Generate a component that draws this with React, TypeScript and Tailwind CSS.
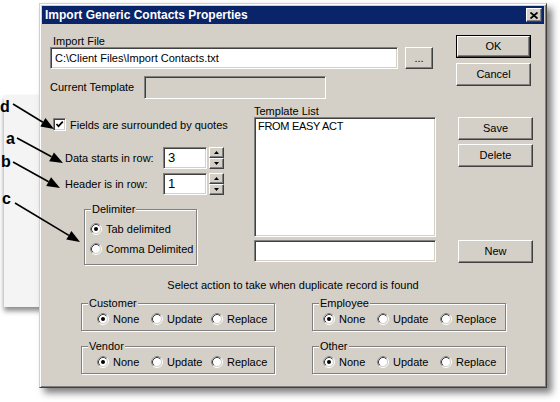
import type { ReactNode } from "react";

const raised =
  "bg-[#d4d0c8] border border-t-white border-l-white border-r-[#404040] border-b-[#404040] shadow-[inset_-1px_-1px_0_#808080]";
const sunken =
  "border border-t-[#808080] border-l-[#808080] border-r-white border-b-white shadow-[inset_1px_1px_0_#404040,inset_-1px_-1px_0_#d4d0c8]";

function Button({ label, className = "", isDefault = false }: { label: string; className?: string; isDefault?: boolean }) {
  if (isDefault)
    return (
      <div className={`border border-black ${className}`}>
        <div className={`${raised} h-full flex items-center justify-center`}>{label}</div>
      </div>
    );
  return <div className={`${raised} flex items-center justify-center ${className}`}>{label}</div>;
}

function Radio({ checked = false }: { checked?: boolean }) {
  return (
    <svg width="12" height="12" viewBox="0 0 12 12" className="shrink-0">
      <circle cx="6" cy="6" r="5.5" fill="none" stroke="#fff" />
      <path d="M2.11 9.89 A5.5 5.5 0 0 1 9.89 2.11" fill="none" stroke="#808080" />
      <circle cx="6" cy="6" r="4.5" fill="#fff" stroke="#d4d0c8" />
      <path d="M2.82 9.18 A4.5 4.5 0 0 1 9.18 2.82" fill="none" stroke="#404040" />
      {checked && <circle cx="6" cy="6" r="2" fill="#000" />}
    </svg>
  );
}

function RadioItem({ label, checked = false, className = "" }: { label: string; checked?: boolean; className?: string }) {
  return (
    <div className={`flex items-center gap-[4px] whitespace-nowrap ${className}`}>
      <Radio checked={checked} />
      <span className="leading-[12px]">{label}</span>
    </div>
  );
}

function Group({ label, className = "", children }: { label: string; className?: string; children?: ReactNode }) {
  return (
    <div className={`relative border border-[#808080] shadow-[inset_1px_1px_0_#fff,1px_1px_0_#fff] ${className}`}>
      <span className="absolute -top-[7px] left-[6px] bg-[#d4d0c8] px-[1px] leading-[12px]">{label}</span>
      {children}
    </div>
  );
}

function Spin({ value }: { value: string }) {
  return (
    <div className="flex items-center h-[22px]">
      <div className={`${sunken} bg-white w-[44px] h-[22px] flex items-center pl-[4px] text-[13px]`}>{value}</div>
      <div className="ml-[2px] flex flex-col w-[15px]">
        <div className={`${raised} h-[11px] flex items-center justify-center`}>
          <svg width="5" height="3" viewBox="0 0 5 3"><path d="M2.5 0 L5 3 L0 3 Z" fill="#000" /></svg>
        </div>
        <div className={`${raised} h-[11px] flex items-center justify-center`}>
          <svg width="5" height="3" viewBox="0 0 5 3"><path d="M0 0 L5 0 L2.5 3 Z" fill="#000" /></svg>
        </div>
      </div>
    </div>
  );
}

function Arrow({ x1, y1, x2, y2 }: { x1: number; y1: number; x2: number; y2: number }) {
  const dx = x2 - x1;
  const dy = y2 - y1;
  const len = Math.hypot(dx, dy);
  const ux = dx / len;
  const uy = dy / len;
  const hl = 13;
  const hw = 5;
  const bx = x2 - ux * hl;
  const by = y2 - uy * hl;
  const pts = `${x2},${y2} ${bx - uy * hw},${by + ux * hw} ${bx + uy * hw},${by - ux * hw}`;
  return (
    <g>
      <line x1={x1} y1={y1} x2={bx} y2={by} stroke="#000" strokeWidth="1.6" />
      <polygon points={pts} fill="#000" />
    </g>
  );
}

const actions = [
  { label: "Customer", pad: "pl-[15px]", w1: "w-[54px]", w2: "w-[60px]" },
  { label: "Employee", pad: "pl-[10px]", w1: "w-[54px]", w2: "w-[63px]" },
  { label: "Vendor", pad: "pl-[15px]", w1: "w-[54px]", w2: "w-[60px]" },
  { label: "Other", pad: "pl-[10px]", w1: "w-[54px]", w2: "w-[63px]" },
];

export default function App() {
  return (
    <div className="relative w-[560px] h-[402px] bg-white overflow-hidden font-['Liberation_Sans',Arial,sans-serif] text-[11px] text-black">
      {/* window behind, on the left */}
      <div className="absolute left-[4px] top-[95px] w-[60px] h-[212px] bg-[#f4f4f4] shadow-[0_4px_5px_rgba(0,0,0,0.45)]" />

      <div className="relative pl-[39px] pt-[3px]">
        <div className="w-[508px] h-[385px] bg-[#d4d0c8] border border-[#d4d0c8] border-r-[#404040] border-b-[#404040] shadow-[inset_1px_1px_0_#fff,inset_-1px_-1px_0_#808080,5px_5px_7px_rgba(0,0,0,0.5)] p-[2px] flex flex-col">
          {/* title bar */}
          <div className="h-[18px] bg-[#0a246a] flex items-center justify-between pl-[3px] pr-[2px]">
            <span className="text-white font-bold text-[12px] leading-[18px]">Import Generic Contacts Properties</span>
            <div className={`${raised} w-[16px] h-[14px] flex items-center justify-center`}>
              <svg width="8" height="7" viewBox="0 0 8 7">
                <path d="M0.5 0.5 L7.5 6.5 M7.5 0.5 L0.5 6.5" stroke="#000" strokeWidth="1.8" />
              </svg>
            </div>
          </div>

          {/* top section */}
          <div className="flex pl-[8px]">
            <div className="w-[386px] flex flex-col">
              <div className="mt-[11px] pl-[3px] h-[12px] leading-[12px]">Import File</div>
              <div className="flex gap-[7px] h-[22px]">
                <div className={`${sunken} bg-white w-[348px] flex items-center pl-[4px]`}>
                  C:\Client Files\Import Contacts.txt
                </div>
                <Button label="..." className="w-[28px]" />
              </div>
              <div className="mt-[7px] flex items-center h-[23px]">
                <span className="w-[94px]">Current Template</span>
                <div className={`${sunken} bg-[#d4d0c8] w-[182px] h-[23px]`} />
              </div>

              <div className="mt-[6px] flex">
                <div className="w-[204px] flex flex-col">
                  <div className="mt-[13px] ml-[3px] flex items-center gap-[4px] h-[13px]">
                    <div className={`${sunken} bg-white w-[13px] h-[13px] flex items-center justify-center`}>
                      <svg width="9" height="9" viewBox="0 0 9 9">
                        <path d="M1.5 4 L3.5 6.2 L7.8 1.6" fill="none" stroke="#000" strokeWidth="1.7" />
                      </svg>
                    </div>
                    <span className="leading-[12px] whitespace-nowrap">Fields are surrounded by quotes</span>
                  </div>
                  <div className="mt-[16px] flex items-center pl-[15px]">
                    <span className="w-[98px] whitespace-nowrap">Data starts in row:</span>
                    <Spin value="3" />
                  </div>
                  <div className="mt-[4px] flex items-center pl-[15px]">
                    <span className="w-[98px] whitespace-nowrap">Header is in row:</span>
                    <Spin value="1" />
                  </div>
                  <Group label="Delimiter" className="mt-[14px] ml-[34px] w-[113px] h-[56px] pt-[13px] pl-[5px]">
                    <RadioItem label="Tab delimited" checked />
                    <RadioItem label="Comma Delimited" className="mt-[8px]" />
                  </Group>
                </div>
                <div className="w-[182px] flex flex-col">
                  <div className="h-[12px] leading-[12px]">Template List</div>
                  <div className={`${sunken} bg-white h-[120px] px-[3px] pt-[2px] leading-[13px] tracking-[-0.3px]`}>FROM EASY ACT</div>
                  <div className={`${sunken} bg-white h-[22px] mt-[3px]`} />
                </div>
              </div>
            </div>

            <div className="ml-[20px] w-[77px] flex flex-col">
              <Button label="OK" isDefault className="mt-[11px] h-[23px] w-[75px]" />
              <Button label="Cancel" className="mt-[5px] h-[23px] w-[75px]" />
              <Button label="Save" className="mt-[31px] ml-[2px] h-[23px] w-[75px]" />
              <Button label="Delete" className="mt-[4px] ml-[2px] h-[23px] w-[75px]" />
              <Button label="New" className="mt-[73px] ml-[2px] h-[23px] w-[75px]" />
            </div>
          </div>

          {/* duplicate actions */}
          <div className="mt-[14px] text-center leading-[12px]">Select action to take when duplicate record is found</div>
          <div className="mt-[12px] pl-[39px] grid grid-cols-[194px_194px] gap-x-[37px] gap-y-[15px]">
            {actions.map((a) => (
              <Group key={a.label} label={a.label} className={`h-[28px] flex items-start pt-[9px] ${a.pad}`}>
                <RadioItem label="None" checked className={a.w1} />
                <RadioItem label="Update" className={a.w2} />
                <RadioItem label="Replace" />
              </Group>
            ))}
          </div>
        </div>
      </div>

      {/* annotations */}
      <svg className="absolute inset-0 pointer-events-none" width="560" height="402">
        <Arrow x1={13} y1={104} x2={54} y2={129} />
        <Arrow x1={17} y1={138} x2={63} y2={163} />
        <Arrow x1={13} y1={162} x2={60} y2={188} />
        <Arrow x1={15} y1={203} x2={80} y2={242} />
      </svg>
      <span className="absolute left-[0px] top-[99px] font-bold text-[16px] leading-[16px]">d</span>
      <span className="absolute left-[6px] top-[131px] font-bold text-[16px] leading-[16px]">a</span>
      <span className="absolute left-[1px] top-[154px] font-bold text-[16px] leading-[16px]">b</span>
      <span className="absolute left-[2px] top-[191px] font-bold text-[16px] leading-[16px]">c</span>
    </div>
  );
}
